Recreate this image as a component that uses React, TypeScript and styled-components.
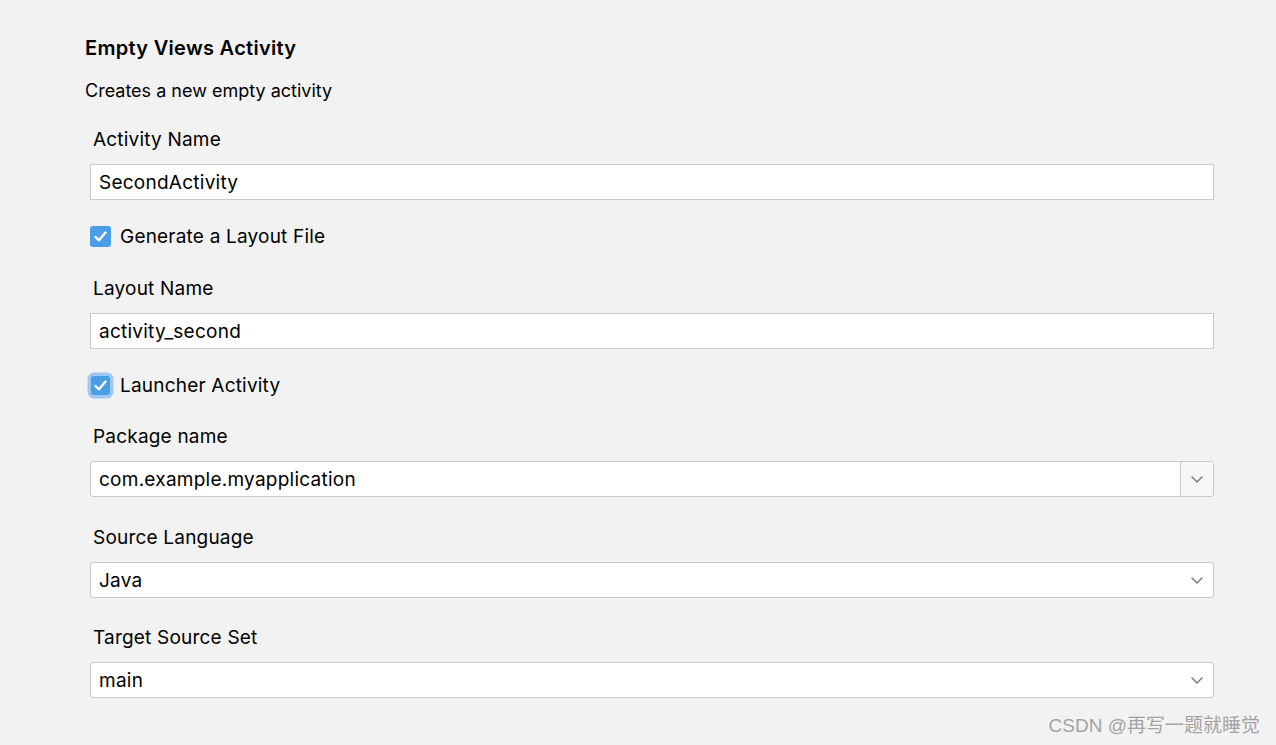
import React from 'react';
import styled, { createGlobalStyle } from 'styled-components';

const GlobalStyle = createGlobalStyle`
  html, body {
    margin: 0;
    padding: 0;
    background: #f2f2f2;
  }
  body {
    font-family: Inter, "Noto Sans", "Noto Sans CJK SC", sans-serif;
    color: #000000;
  }
`;

const Page = styled.div`
  position: relative;
  min-height: 745px;
  box-sizing: border-box;
  padding: 36px 62px 0 85px;
  display: flex;
  flex-direction: column;
`;

const Title = styled.div`
  font-size: 20px;
  font-weight: 600;
  line-height: 24px;
  letter-spacing: 0.3px;
`;

const Subtitle = styled.div`
  margin-top: 19px;
  font-size: 18px;
  line-height: 24px;
`;

const Form = styled.div`
  margin-left: 5px;
  display: flex;
  flex-direction: column;
`;

const Label = styled.div<{ $gap: number }>`
  margin-top: ${(p) => p.$gap + 1}px;
  padding-left: 3px;
  font-size: 19px;
  letter-spacing: 0.2px;
  line-height: 24px;
  margin-bottom: 12px;
`;

const TextField = styled.div`
  height: 36px;
  box-sizing: border-box;
  border: 1px solid #c9c9c9;
  background: #ffffff;
  display: flex;
  align-items: center;
  padding-left: 8px;
  font-size: 19px;
  letter-spacing: 0.25px;
`;

const Combo = styled.div`
  height: 36px;
  box-sizing: border-box;
  border: 1px solid #c9c9c9;
  border-radius: 3px;
  background: #ffffff;
  display: flex;
  align-items: stretch;
  font-size: 19px;
  letter-spacing: 0.25px;
`;

const ComboValue = styled.div`
  flex: 1;
  display: flex;
  align-items: center;
  padding-left: 8px;
`;

const ComboButton = styled.div<{ $split?: boolean }>`
  width: 32px;
  display: flex;
  align-items: center;
  justify-content: center;
  border-left: ${(p) => (p.$split ? '1px solid #c9c9c9' : 'none')};
  background: ${(p) => (p.$split ? '#f7f7f7' : 'transparent')};
  border-radius: 0 3px 3px 0;
`;

const CheckRow = styled.div<{ $gap: number }>`
  margin-top: ${(p) => p.$gap}px;
  height: 24px;
  display: flex;
  align-items: center;
  gap: 9px;
  font-size: 19px;
  letter-spacing: 0.2px;
`;

const Box = styled.div<{ $focused?: boolean }>`
  box-sizing: border-box;
  border-radius: 3px;
  background: #4a9de6;
  display: flex;
  align-items: center;
  justify-content: center;
  margin: ${(p) => (p.$focused ? '0 1px 0 1px' : '0')};
  box-shadow: ${(p) => (p.$focused ? '0 0 0 3.5px #9ec7f3' : 'none')};
  width: ${(p) => (p.$focused ? '19px' : '21px')};
  height: ${(p) => (p.$focused ? '19px' : '21px')};
`;

const Watermark = styled.div`
  position: absolute;
  right: 16px;
  bottom: 7px;
  font-family: "Liberation Sans", "Noto Sans CJK SC", sans-serif;
  font-size: 19px;
  color: #a3a3a3;
  line-height: 24px;
`;

const Check = () => (
  <svg width="13" height="11" viewBox="0 0 13 11" fill="none">
    <path d="M1.5 6 L5 9.3 L11.5 1.6" stroke="#ffffff" strokeWidth="2.4" strokeLinecap="round" strokeLinejoin="round" />
  </svg>
);

const Chevron = () => (
  <svg width="12" height="7" viewBox="0 0 12 7" fill="none">
    <path d="M1 1 L6 6 L11 1" stroke="#6e6e80" strokeWidth="1.3" strokeLinecap="round" strokeLinejoin="round" />
  </svg>
);

export default function App() {
  return (
    <>
      <GlobalStyle />
      <Page>
        <Title>Empty Views Activity</Title>
        <Subtitle>Creates a new empty activity</Subtitle>
        <Form>
          <Label $gap={24}>Activity Name</Label>
          <TextField>SecondActivity</TextField>
          <CheckRow $gap={24}>
            <Box>
              <Check />
            </Box>
            Generate a Layout File
          </CheckRow>
          <Label $gap={28}>Layout Name</Label>
          <TextField>activity_second</TextField>
          <CheckRow $gap={24}>
            <Box $focused>
              <Check />
            </Box>
            Launcher Activity
          </CheckRow>
          <Label $gap={27}>Package name</Label>
          <Combo>
            <ComboValue>com.example.myapplication</ComboValue>
            <ComboButton $split>
              <Chevron />
            </ComboButton>
          </Combo>
          <Label $gap={28}>Source Language</Label>
          <Combo>
            <ComboValue>Java</ComboValue>
            <ComboButton>
              <Chevron />
            </ComboButton>
          </Combo>
          <Label $gap={27}>Target Source Set</Label>
          <Combo>
            <ComboValue>main</ComboValue>
            <ComboButton>
              <Chevron />
            </ComboButton>
          </Combo>
        </Form>
        <Watermark>CSDN @再写一题就睡觉</Watermark>
      </Page>
    </>
  );
}
